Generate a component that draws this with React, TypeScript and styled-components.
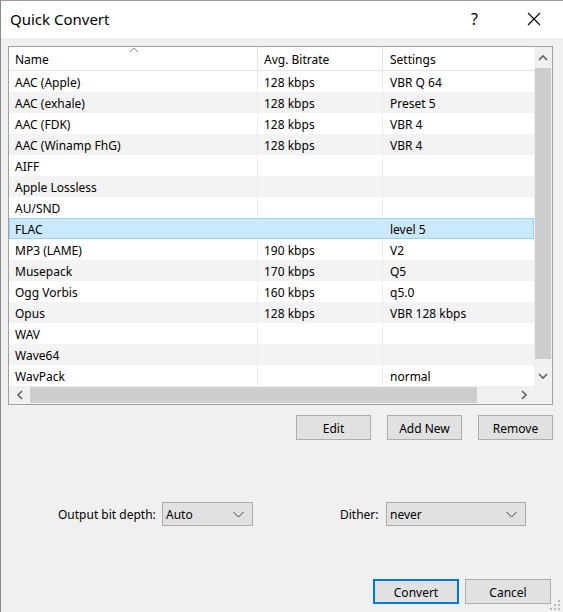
import React from "react";
import styled, { createGlobalStyle } from "styled-components";

const Global = createGlobalStyle`
  html, body { margin: 0; padding: 0; background: #f0f0f0; overflow: hidden; }
  body { font-family: "Noto Sans", "Open Sans", sans-serif; font-size: 12px; color: #000; }
  * { box-sizing: border-box; }
`;

const Window = styled.div`
  position: relative;
  width: 563px;
  height: 612px;
  background: #f0f0f0;
  border-left: 1px solid #8a8a8a;
  border-top: 1px solid #9a9a9a;
  display: flex;
  flex-direction: column;
`;

const TitleBar = styled.div`
  height: 37px;
  background: #fff;
  display: flex;
  align-items: center;
  flex-shrink: 0;
`;

const Title = styled.div`
  flex: 1;
  padding-left: 9px;
  font-size: 15px;
  padding-bottom: 2px;
`;

const TitleButton = styled.div`
  width: 59px;
  height: 37px;
  display: flex;
  align-items: center;
  justify-content: center;
  font-size: 16px;
  color: #000;
  padding-bottom: 2px;
`;

const Body = styled.div`
  flex: 1;
  display: flex;
  flex-direction: column;
  padding: 8px 10px 0 7px;
`;

const ListView = styled.div`
  height: 359px;
  border: 1px solid #a0a0a0;
  background: #fff;
  display: grid;
  grid-template-columns: 1fr 18px;
  grid-template-rows: 1fr 18px;
  overflow: hidden;
`;

const Table = styled.div`
  display: flex;
  flex-direction: column;
  overflow: hidden;
`;

const Columns = "249px 125px 1fr";

const HeaderRow = styled.div`
  position: relative;
  height: 24px;
  display: grid;
  grid-template-columns: ${Columns};
  border-bottom: 1px solid #e5e5e5;
  flex-shrink: 0;
`;

const HeaderCell = styled.div<{ $last?: boolean }>`
  display: flex;
  align-items: center;
  padding-left: ${(p) => (p.$last ? 7 : 6)}px;
  padding-top: 2px;
  border-right: ${(p) => (p.$last ? "none" : "1px solid #e5e5e5")};
  white-space: nowrap;
  color: #000;
`;

const SortArrow = styled.svg`
  position: absolute;
  left: 120px;
  top: 0px;
`;

const Row = styled.div<{ $alt?: boolean; $selected?: boolean }>`
  height: 21px;
  display: grid;
  grid-template-columns: ${Columns};
  background: ${(p) => (p.$selected ? "#cce8ff" : p.$alt ? "#f3f3f3" : "#fff")};
  outline: ${(p) => (p.$selected ? "1px solid #99d1ff" : "none")};
  outline-offset: -1px;
  flex-shrink: 0;
`;

const Cell = styled.div<{ $last?: boolean; $selected?: boolean }>`
  display: flex;
  align-items: center;
  padding-left: ${(p) => (p.$last ? 7 : 6)}px;
  padding-top: 1px;
  border-right: ${(p) =>
    p.$last || p.$selected ? "1px solid transparent" : "1px solid #ececec"};
  white-space: nowrap;
`;

const VScroll = styled.div`
  background: #f0f0f0;
  display: flex;
  flex-direction: column;
`;

const HScroll = styled.div`
  background: #f0f0f0;
  display: flex;
`;

const ArrowBox = styled.div<{ $v?: boolean }>`
  width: ${(p) => (p.$v ? "18px" : "21px")};
  height: ${(p) => (p.$v ? "21px" : "18px")};
  display: flex;
  align-items: center;
  justify-content: center;
  flex-shrink: 0;
`;

const Track = styled.div<{ $v?: boolean }>`
  flex: 1;
  display: flex;
  flex-direction: ${(p) => (p.$v ? "column" : "row")};
  padding: ${(p) => (p.$v ? "0 1px 0 1px" : "1px 0 1px 0")};
`;

const Thumb = styled.div`
  background: #cdcdcd;
`;

const Corner = styled.div`
  background: #f0f0f0;
`;

const ButtonRow = styled.div`
  display: flex;
  justify-content: flex-end;
  gap: 16px;
  margin-top: 10px;
  padding-right: 0;
`;

const Button = styled.button<{ $w: number; $default?: boolean }>`
  width: ${(p) => p.$w}px;
  height: 25px;
  background: #e1e1e1;
  border: ${(p) => (p.$default ? "2px solid #0078d7" : "1px solid #adadad")};
  font-family: inherit;
  font-size: 12px;
  color: #000;
  padding: 0;
  padding-top: 1px;
`;

const OptionsRow = styled.div`
  display: grid;
  grid-template-columns: 104px 91px 87px 46px 140px;
  align-items: center;
  margin-top: 62px;
  padding-left: 50px;
`;

const Label = styled.div`
  white-space: nowrap;
`;

const Combo = styled.div`
  height: 24px;
  background: #e1e1e1;
  border: 1px solid #adadad;
  display: flex;
  align-items: center;
  justify-content: space-between;
  padding: 1px 8px 0 3px;
`;

const Footer = styled.div`
  display: flex;
  justify-content: flex-end;
  gap: 6px;
  margin-top: 53px;
  padding-right: 2px;
`;

const Grip = styled.svg`
  position: absolute;
  right: 2px;
  bottom: 1px;
`;

const Chevron = ({ dir }: { dir: "up" | "down" | "left" | "right" }) => {
  const paths: Record<string, string> = {
    up: "M1 6 L5 2 L9 6",
    down: "M1 2 L5 6 L9 2",
    left: "M6 1 L2 5 L6 9",
    right: "M2 1 L6 5 L2 9",
  };
  const vert = dir === "up" || dir === "down";
  return (
    <svg width={vert ? 10 : 8} height={vert ? 8 : 10} viewBox={vert ? "0 0 10 8" : "0 0 8 10"}>
      <path d={paths[dir]} fill="none" stroke="#606060" strokeWidth="1.6" />
    </svg>
  );
};

const ComboArrow = () => (
  <svg width="11" height="7" viewBox="0 0 11 7">
    <path d="M0.5 1 L5.5 6 L10.5 1" fill="none" stroke="#404040" strokeWidth="1" />
  </svg>
);

const rows: [string, string, string][] = [
  ["AAC (Apple)", "128 kbps", "VBR Q 64"],
  ["AAC (exhale)", "128 kbps", "Preset 5"],
  ["AAC (FDK)", "128 kbps", "VBR 4"],
  ["AAC (Winamp FhG)", "128 kbps", "VBR 4"],
  ["AIFF", "", ""],
  ["Apple Lossless", "", ""],
  ["AU/SND", "", ""],
  ["FLAC", "", "level 5"],
  ["MP3 (LAME)", "190 kbps", "V2"],
  ["Musepack", "170 kbps", "Q5"],
  ["Ogg Vorbis", "160 kbps", "q5.0"],
  ["Opus", "128 kbps", "VBR 128 kbps"],
  ["WAV", "", ""],
  ["Wave64", "", ""],
  ["WavPack", "", "normal"],
];

export default function App() {
  return (
    <>
      <Global />
      <Window>
        <TitleBar>
          <Title>Quick Convert</Title>
          <TitleButton>?</TitleButton>
          <TitleButton>
            <svg width="14" height="14" viewBox="0 0 14 14">
              <path d="M1 1 L13 13 M13 1 L1 13" stroke="#000" strokeWidth="1.1" />
            </svg>
          </TitleButton>
        </TitleBar>
        <Body>
          <ListView>
            <Table>
              <HeaderRow>
                <SortArrow width="10" height="6" viewBox="0 0 10 6">
                  <path d="M1 5 L5 1 L9 5" fill="none" stroke="#8a8a8a" strokeWidth="1" />
                </SortArrow>
                <HeaderCell>Name</HeaderCell>
                <HeaderCell>Avg. Bitrate</HeaderCell>
                <HeaderCell $last>Settings</HeaderCell>
              </HeaderRow>
              {rows.map((r, i) => {
                const selected = r[0] === "FLAC";
                return (
                  <Row key={r[0]} $alt={i % 2 === 1} $selected={selected}>
                    <Cell $selected={selected}>{r[0]}</Cell>
                    <Cell $selected={selected}>{r[1]}</Cell>
                    <Cell $last>{r[2]}</Cell>
                  </Row>
                );
              })}
            </Table>
            <VScroll>
              <ArrowBox $v>
                <Chevron dir="up" />
              </ArrowBox>
              <Track $v>
                <Thumb style={{ height: 291 }} />
              </Track>
              <ArrowBox $v>
                <Chevron dir="down" />
              </ArrowBox>
            </VScroll>
            <HScroll>
              <ArrowBox>
                <Chevron dir="left" />
              </ArrowBox>
              <Track>
                <Thumb style={{ width: 447 }} />
              </Track>
              <ArrowBox>
                <Chevron dir="right" />
              </ArrowBox>
            </HScroll>
            <Corner />
          </ListView>
          <ButtonRow>
            <Button $w={75}>Edit</Button>
            <Button $w={75}>Add New</Button>
            <Button $w={75}>Remove</Button>
          </ButtonRow>
          <OptionsRow>
            <Label>Output bit depth:</Label>
            <Combo>
              <span>Auto</span>
              <ComboArrow />
            </Combo>
            <span />
            <Label>Dither:</Label>
            <Combo>
              <span>never</span>
              <ComboArrow />
            </Combo>
          </OptionsRow>
          <Footer>
            <Button $w={86} $default>
              Convert
            </Button>
            <Button $w={86}>Cancel</Button>
          </Footer>
        </Body>
        <Grip width="12" height="12" viewBox="0 0 12 12">
          {[
            [9, 1],
            [9, 5],
            [5, 5],
            [9, 9],
            [5, 9],
            [1, 9],
          ].map(([x, y]) => (
            <rect key={`${x}-${y}`} x={x} y={y} width="2" height="2" fill="#b8b8b8" />
          ))}
        </Grip>
      </Window>
    </>
  );
}
